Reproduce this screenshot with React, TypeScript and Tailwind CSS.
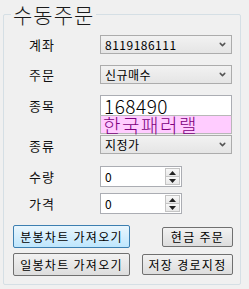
import { ChevronDown } from 'lucide-react'

const font = { fontFamily: '"Noto Sans CJK KR", "Noto Sans", sans-serif' }

function Combo({ value }: { value: string }) {
  return (
    <div className="w-[132px] h-[19px] border border-[#acacac] bg-gradient-to-b from-[#f2f2f2] to-[#e5e5e5] flex items-center pl-[4px] pr-[4px]">
      <span className="flex-1 text-[12px] leading-none text-black tracking-[0.5px]">{value}</span>
      <ChevronDown className="w-[9px] h-[9px] text-[#555]" strokeWidth={4} />
    </div>
  )
}

function Spin({ value }: { value: string }) {
  return (
    <div className="w-[82px] h-[21px] border border-[#abadb3] bg-white flex items-center pl-[4px] pr-[1px]">
      <span className="flex-1 text-[12px] leading-none text-black">{value}</span>
      <div className="w-[15px] h-[17px] flex flex-col border border-[#c4c4c4]">
        <div className="flex-1 flex items-center justify-center bg-gradient-to-b from-[#f8f8f8] to-[#e8e8e8] border-b border-[#c4c4c4]">
          <svg width="7" height="4" viewBox="0 0 7 4"><path d="M3.5 0L7 4H0z" fill="#222" /></svg>
        </div>
        <div className="flex-1 flex items-center justify-center bg-gradient-to-b from-[#f8f8f8] to-[#e8e8e8]">
          <svg width="7" height="4" viewBox="0 0 7 4"><path d="M0 0h7L3.5 4z" fill="#222" /></svg>
        </div>
      </div>
    </div>
  )
}

function Label({ text }: { text: string }) {
  return <div className="w-[52px] ml-[12px] mr-[32px] text-center text-[13px] leading-none text-[#111] tracking-[1px]">{text}</div>
}

function Btn({ text, w, active }: { text: string; w: string; active?: boolean }) {
  return (
    <button
      className={`${w} flex items-center justify-center rounded-[2px] border text-[12px] leading-none tracking-[1.3px] text-black ${
        active
          ? 'border-[#3c7fb1] bg-gradient-to-b from-[#eaf6fd] to-[#bee6fd]'
          : 'border-[#707070] bg-gradient-to-b from-[#f2f2f2] to-[#dddddd]'
      }`}
    >
      {text}
    </button>
  )
}

export default function App() {
  return (
    <div className="w-[249px] h-[289px] bg-[#f0f0f0] relative pt-[14px] pl-[3px]" style={font}>
      {/* group box */}
      <div className="w-[238px] h-[271px] border border-[#d5dfe5] rounded-[2px] flex flex-col">
        <div className="flex items-center mt-[20px]">
          <Label text="계좌" />
          <Combo value="8119186111" />
        </div>
        <div className="flex items-center mt-[11px]">
          <Label text="주문" />
          <Combo value="신규매수" />
        </div>
        <div className="flex mt-[11px]">
          <div className="h-[21px] flex items-center">
            <Label text="종목" />
          </div>
          <div className="flex flex-col">
            <div className="w-[132px] h-[21px] border border-[#abadb3] bg-white flex items-center pl-[3px] text-[19px] leading-[19px] font-light text-black tracking-[0.5px]">
              168490
            </div>
            <div className="w-[132px] h-[19px] mt-[-1px] border border-[#b8b8b8] bg-[#ffccff] flex items-center pl-[2px] text-[19px] leading-[17px] font-light text-[#800080] tracking-[1.5px]">
              한국패러랠
            </div>
          </div>
        </div>
        <div className="flex items-center mt-[1px]">
          <Label text="종류" />
          <div className="h-[20px] flex">
            <Combo value="지정가" />
          </div>
        </div>
        <div className="flex items-center mt-[11px]">
          <Label text="수량" />
          <Spin value="0" />
        </div>
        <div className="flex items-center mt-[6px]">
          <Label text="가격" />
          <Spin value="0" />
        </div>
        <div className="flex items-center mt-[11px] pl-[9px]">
          <div className="h-[23px] flex">
            <Btn text="분봉차트 가져오기" w="w-[117px]" active />
          </div>
          <div className="h-[20px] flex ml-[32px]">
            <Btn text="현금 주문" w="w-[71px]" />
          </div>
        </div>
        <div className="flex items-center mt-[5px] pl-[9px]">
          <div className="h-[23px] flex">
            <Btn text="일봉차트 가져오기" w="w-[117px]" />
          </div>
          <div className="h-[21px] flex ml-[12px]">
            <Btn text="저장 경로지정" w="w-[91px]" />
          </div>
        </div>
      </div>
      {/* group box title over the border */}
      <div className="absolute left-[11px] top-[2px] px-[2px] bg-[#f0f0f0] text-[21px] leading-[24px] font-light text-[#1a1a1a] tracking-[1px]">
        수동주문
      </div>
    </div>
  )
}
